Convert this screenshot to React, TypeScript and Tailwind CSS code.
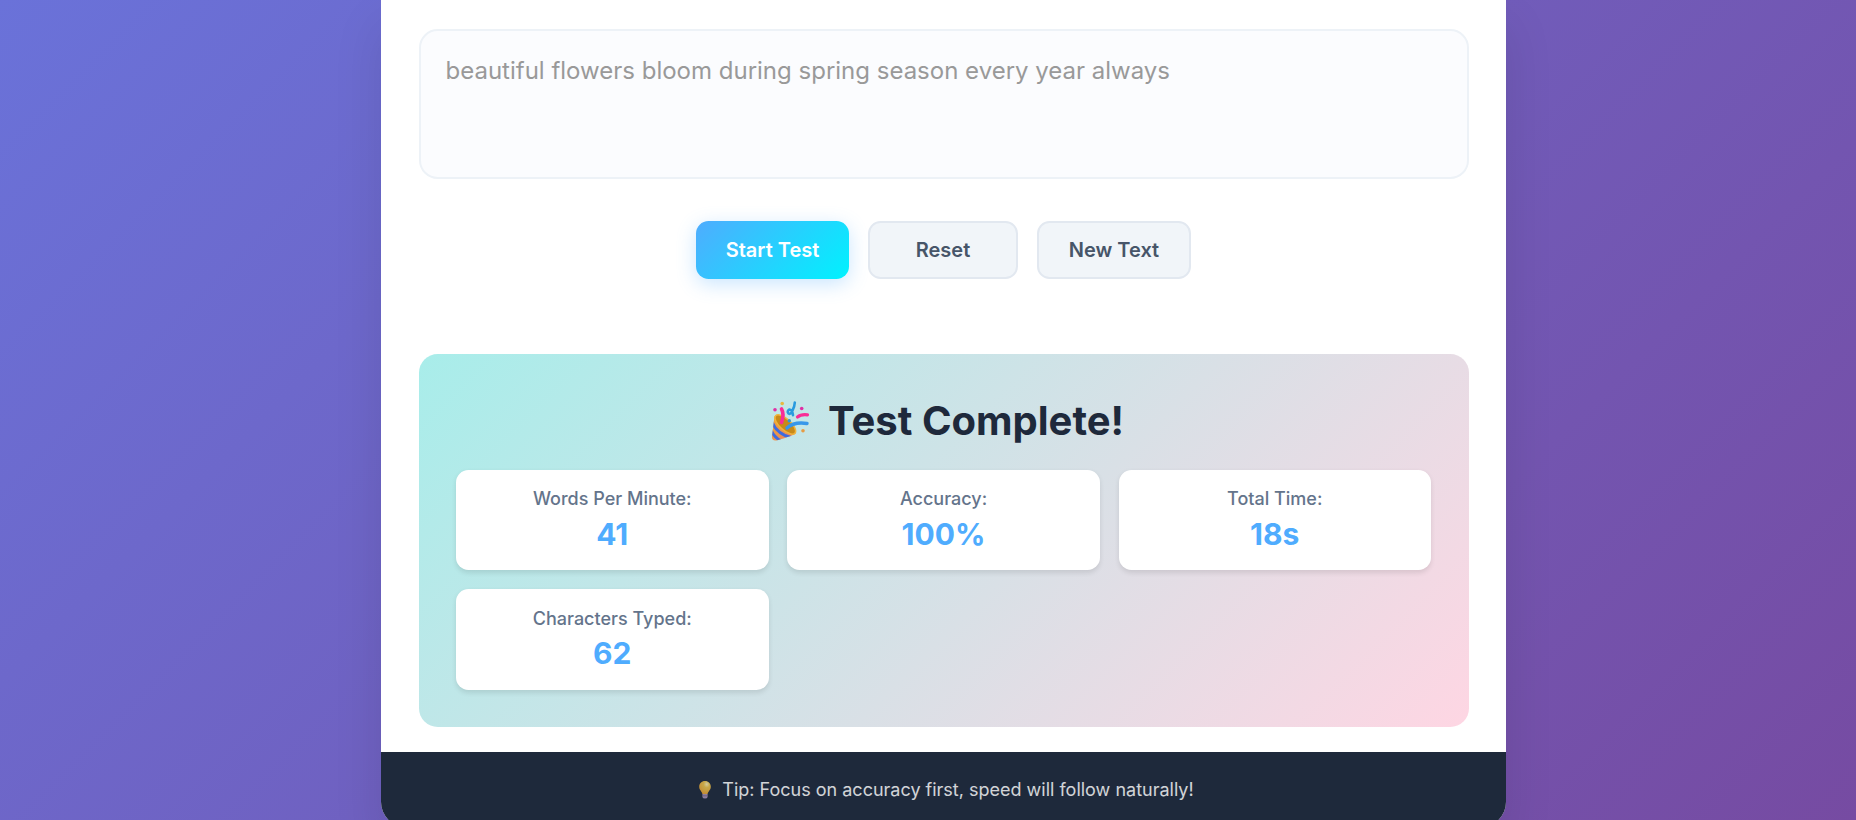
import type { ReactNode } from "react";

const results = [
  { label: "Words Per Minute:", value: "41" },
  { label: "Accuracy:", value: "100%" },
  { label: "Total Time:", value: "18s" },
  { label: "Characters Typed:", value: "62" },
];

function PartyPopper() {
  return (
    <svg viewBox="0 0 60 60" className="-mt-[2px] h-[60px] w-[60px] shrink-0" fill="none" strokeLinecap="round" aria-hidden="true">
      <defs>
        <linearGradient id="cone" x1="12" y1="30" x2="34" y2="46" gradientUnits="userSpaceOnUse">
          <stop stopColor="#f0a52d" />
          <stop offset="1" stopColor="#e8836b" />
        </linearGradient>
        <clipPath id="coneClip">
          <path d="M14.5 26.5 Q24 28 35.5 43 Q34 45.5 16.5 50.5 Q11.5 51 12 46.5 Z" />
        </clipPath>
      </defs>
      <path d="M14.5 26 Q24 28 36 43 Q34 45.5 16.5 50.5 Q11.5 51 12 46.5 Z" fill="url(#cone)" />
      <g clipPath="url(#coneClip)" stroke="#3e6be0" strokeWidth="3">
        <path d="M12 32 Q17 44 31 47.5" />
        <path d="M11 40 Q14 47 21 51" />
      </g>
      <ellipse cx="25.3" cy="34.5" rx="13" ry="5.5" transform="rotate(42 25.3 34.5)" fill="#c88a18" stroke="#f0b33b" strokeWidth="1.5" />
      <path d="M21.5 19 Q24.5 24 21.5 32.5" stroke="#f92d96" strokeWidth="3.6" />
      <path d="M27 38 Q34 31.5 47 33.5" stroke="#3797ea" strokeWidth="3.4" />
      <path d="M37.5 27 Q41 24 47.5 24.8" stroke="#f92d96" strokeWidth="3.2" />
      <path d="M34.8 12.5 Q34.5 17 32.7 20 Q31 25 28.5 23.500 Q26.5 21 29.5 19.5 Q32.5 20 33 25.2" stroke="#299bdf" strokeWidth="2.6" />
      <circle cx="22.2" cy="13.5" r="1.8" fill="#e9b941" />
      <circle cx="15" cy="19.7" r="1.8" fill="#df30a5" />
      <circle cx="41.7" cy="18.5" r="1.8" fill="#df30a5" />
      <circle cx="29.3" cy="30.7" r="1.7" fill="#299bdf" />
      <circle cx="43" cy="40.7" r="1.8" fill="#e69c45" />
    </svg>
  );
}

function Bulb() {
  return (
    <svg viewBox="0 0 14 20" className="h-5 w-3.5 shrink-0" aria-hidden="true">
      <defs>
        <radialGradient id="glass" cx=".65" cy=".25" r=".75">
          <stop stopColor="#fff3b8" />
          <stop offset=".35" stopColor="#f2c84c" />
          <stop offset="1" stopColor="#eda735" />
        </radialGradient>
      </defs>
      <path d="M7 1 C3.5 1 1.2 3.6 1.2 6.7 C1.2 10 4 11.2 4.4 14 H9.6 C10 11.2 12.8 10 12.8 6.7 C12.8 3.6 10.5 1 7 1Z" fill="url(#glass)" />
      <path d="M4.4 14 H9.6 V17 Q9.2 18.5 7 18.5 Q4.8 18.5 4.4 17Z" fill="#a994b8" />
      <path d="M4.4 15.8H9.6" stroke="#6f617f" strokeWidth=".7" />
    </svg>
  );
}

function SecondaryButton({ children, className }: { children: ReactNode; className: string }) {
  return (
    <button
      className={`h-[58px] rounded-[12.5px] border-2 border-[#e2e8f0] bg-[#f1f5f9] text-[20px] font-semibold text-[#475569] ${className}`}
    >
      {children}
    </button>
  );
}

export default function App() {
  return (
    <div className="flex h-[820px] justify-center overflow-hidden bg-linear-[135deg] from-[#6a72d9] to-[#764ba2] pl-[31px] font-['Inter',sans-serif]">
      <main className="flex h-[827px] w-[1125px] shrink-0 flex-col overflow-hidden rounded-b-[25px] bg-white shadow-[0_25px_50px_rgba(0,0,0,0.1)]">
        <div className="flex h-[752px] flex-col px-[37.5px] pt-[29px]">
          <div className="h-[150px] shrink-0 rounded-[18.75px] border-2 border-[#edf2f7] bg-[#fbfcfe] px-[25px] pt-[20px] text-[24px] leading-[40px] text-[#999999]">
            beautiful flowers bloom during spring season every year always
          </div>
          <div className="mt-[42px] flex justify-center gap-[19px]">
            <button className="h-[58px] w-[153px] rounded-[12.5px] bg-linear-[135deg] from-[#4facfe] to-[#00f2fe] text-[20px] font-semibold text-white shadow-[0_5px_19px_rgba(79,172,254,0.3)]">
              Start Test
            </button>
            <SecondaryButton className="w-[150px]">Reset</SecondaryButton>
            <SecondaryButton className="w-[154px]">New Text</SecondaryButton>
          </div>
          <section className="mt-[75px] h-[373px] shrink-0 rounded-[18.75px] bg-linear-[135deg] from-[#a8edea] to-[#fed6e3] px-[37.5px] pt-[37px]">
            <div className="flex h-[60px] items-center justify-center gap-2 pr-[3px]">
              <PartyPopper />
              <h2 className="text-[40px] font-bold text-[#1e293b]">Test Complete!</h2>
            </div>
            <div className="mt-[18.8px] grid grid-cols-3 gap-[18.75px]">
              {results.map((item) => (
                <div
                  key={item.label}
                  className="flex h-[100.5px] flex-col items-center rounded-[12.5px] bg-white pt-[18.5px] shadow-[0_2.5px_5px_rgba(0,0,0,0.1)]"
                >
                  <span className="text-[18px] leading-[22px] font-medium text-[#64748b]">{item.label}</span>
                  <span className="mt-[5.5px] text-[30px] leading-[36px] font-bold text-[#4facfe]">{item.value}</span>
                </div>
              ))}
            </div>
          </section>
        </div>
        <footer className="flex h-[75px] shrink-0 items-center justify-center bg-[#1e293b] pl-[5px] text-[18px] text-white">
          <span className="flex items-center gap-[10px] opacity-80">
            <Bulb />
            Tip: Focus on accuracy first, speed will follow naturally!
          </span>
        </footer>
      </main>
    </div>
  );
}
